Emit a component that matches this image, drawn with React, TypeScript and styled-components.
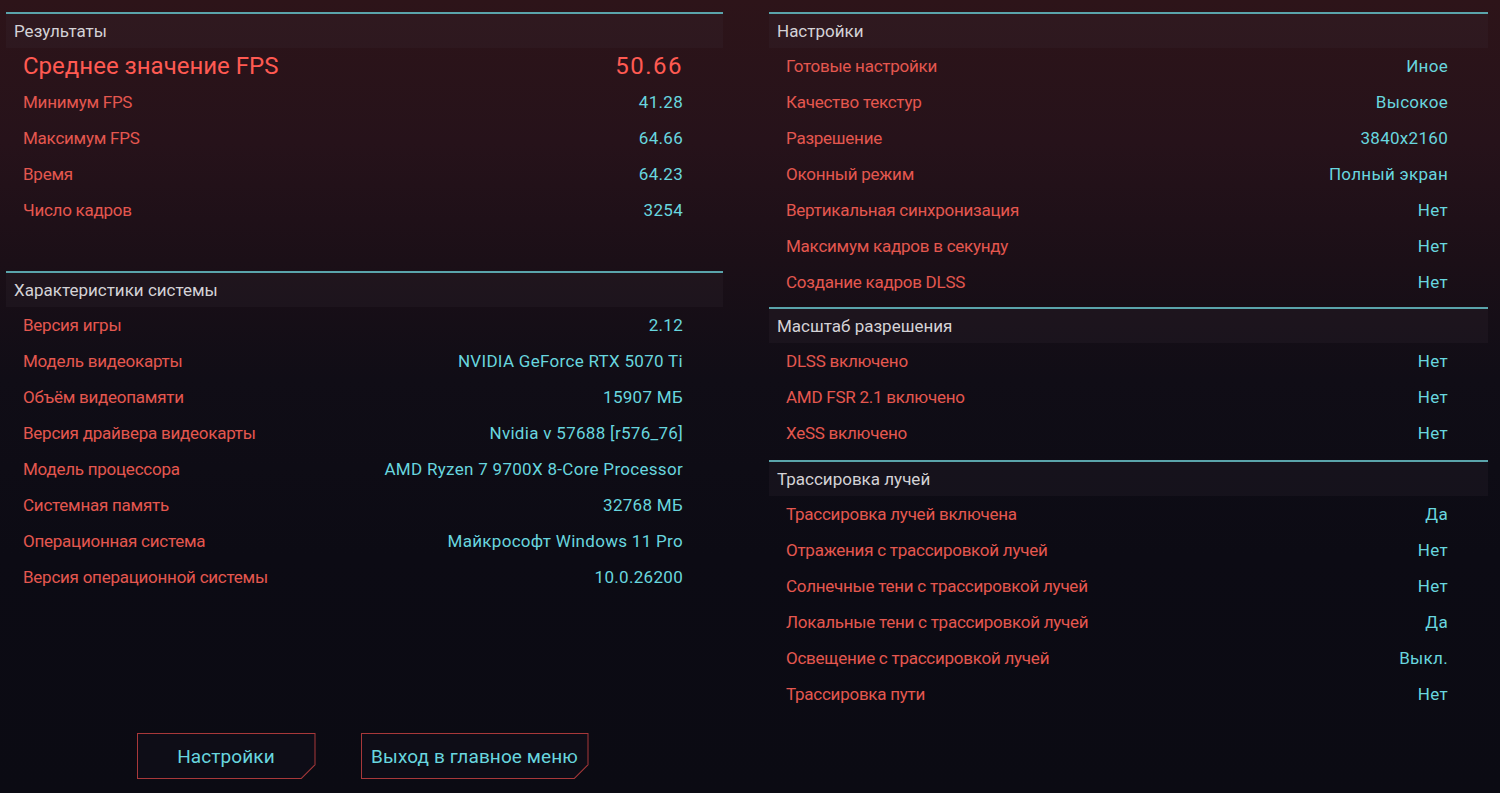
import styled, { createGlobalStyle } from 'styled-components'

const GlobalStyle = createGlobalStyle`
  html, body {
    margin: 0;
    padding: 0;
  }
  body {
    width: 1500px;
    height: 793px;
    overflow: hidden;
    background: linear-gradient(180deg, #2d1419 0%, #26121a 18%, #1b0f17 33%, #100d16 48%, #0c0b14 70%, #0b0b13 100%);
    font-family: Roboto, 'Noto Sans', sans-serif;
  }
`

const Page = styled.main`
  display: grid;
  grid-template-columns: 717px 719px;
  column-gap: 46px;
  padding: 12px 0 0 6px;
  height: 793px;
  box-sizing: border-box;
`

const Column = styled.div`
  display: flex;
  flex-direction: column;
`

const Section = styled.section<{ $after?: number }>`
  display: flex;
  flex-direction: column;
  margin-bottom: ${(p) => p.$after ?? 7}px;
`

const Header = styled.div`
  height: 36px;
  box-sizing: border-box;
  border-top: 2px solid #5aa4ab;
  background: rgba(60, 50, 62, 0.18);
  display: flex;
  align-items: center;
  padding: 0 0 1px 8px;
  color: #d4d2d6;
  font-size: 17px;
`

const Row = styled.div<{ $big?: boolean }>`
  height: 36px;
  box-sizing: border-box;
  display: flex;
  align-items: center;
  justify-content: space-between;
  padding: 0 40px 1px 17px;
  font-size: ${(p) => (p.$big ? '24px' : '17px')};
`

const Label = styled.span<{ $big?: boolean }>`
  color: ${(p) => (p.$big ? '#ff5a52' : '#e4574f')};
  letter-spacing: ${(p) => (p.$big ? '0' : '-0.25px')};
`

const Value = styled.span<{ $big?: boolean }>`
  color: ${(p) => (p.$big ? '#ff5a52' : '#68d6df')};
  letter-spacing: ${(p) => (p.$big ? '1.5px' : '0.3px')};
`

const Buttons = styled.div`
  margin-top: auto;
  margin-bottom: 14px;
  display: flex;
  justify-content: center;
  gap: 45px;
  padding-right: 4px;
`

const ButtonFrame = styled.button<{ $w: number }>`
  width: ${(p) => p.$w}px;
  height: 46px;
  padding: 1px;
  border: none;
  background: #a8383a;
  clip-path: polygon(0 0, 100% 0, 100% calc(100% - 14px), calc(100% - 14px) 100%, 0 100%);
  cursor: pointer;
`

const ButtonInner = styled.span`
  display: flex;
  align-items: center;
  justify-content: center;
  width: 100%;
  height: 100%;
  background: #0e0d17;
  clip-path: polygon(0 0, 100% 0, 100% calc(100% - 13.5px), calc(100% - 13.5px) 100%, 0 100%);
  color: #68d6df;
  font-family: Roboto, 'Noto Sans', sans-serif;
  font-size: 19px;
  letter-spacing: 0.1px;
`

type Item = [string, string]

const results: Item[] = [
  ['Минимум FPS', '41.28'],
  ['Максимум FPS', '64.66'],
  ['Время', '64.23'],
  ['Число кадров', '3254'],
]

const system: Item[] = [
  ['Версия игры', '2.12'],
  ['Модель видеокарты', 'NVIDIA GeForce RTX 5070 Ti'],
  ['Объём видеопамяти', '15907 МБ'],
  ['Версия драйвера видеокарты', 'Nvidia v 57688 [r576_76]'],
  ['Модель процессора', 'AMD Ryzen 7 9700X 8-Core Processor'],
  ['Системная память', '32768 МБ'],
  ['Операционная система', 'Майкрософт Windows 11 Pro'],
  ['Версия операционной системы', '10.0.26200'],
]

const settings: Item[] = [
  ['Готовые настройки', 'Иное'],
  ['Качество текстур', 'Высокое'],
  ['Разрешение', '3840x2160'],
  ['Оконный режим', 'Полный экран'],
  ['Вертикальная синхронизация', 'Нет'],
  ['Максимум кадров в секунду', 'Нет'],
  ['Создание кадров DLSS', 'Нет'],
]

const scaling: Item[] = [
  ['DLSS включено', 'Нет'],
  ['AMD FSR 2.1 включено', 'Нет'],
  ['XeSS включено', 'Нет'],
]

const rayTracing: Item[] = [
  ['Трассировка лучей включена', 'Да'],
  ['Отражения с трассировкой лучей', 'Нет'],
  ['Солнечные тени с трассировкой лучей', 'Нет'],
  ['Локальные тени с трассировкой лучей', 'Да'],
  ['Освещение с трассировкой лучей', 'Выкл.'],
  ['Трассировка пути', 'Нет'],
]

const Rows = ({ items }: { items: Item[] }) => (
  <>
    {items.map(([label, value]) => (
      <Row key={label}>
        <Label>{label}</Label>
        <Value>{value}</Value>
      </Row>
    ))}
  </>
)

export default function App() {
  return (
    <>
      <GlobalStyle />
      <Page>
        <Column>
          <Section $after={43}>
            <Header>Результаты</Header>
            <Row $big>
              <Label $big>Среднее значение FPS</Label>
              <Value $big>50.66</Value>
            </Row>
            <Rows items={results} />
          </Section>
          <Section>
            <Header>Характеристики системы</Header>
            <Rows items={system} />
          </Section>
          <Buttons>
            <ButtonFrame $w={179}>
              <ButtonInner>Настройки</ButtonInner>
            </ButtonFrame>
            <ButtonFrame $w={228}>
              <ButtonInner>Выход в главное меню</ButtonInner>
            </ButtonFrame>
          </Buttons>
        </Column>
        <Column>
          <Section>
            <Header>Настройки</Header>
            <Rows items={settings} />
          </Section>
          <Section $after={9}>
            <Header>Масштаб разрешения</Header>
            <Rows items={scaling} />
          </Section>
          <Section>
            <Header>Трассировка лучей</Header>
            <Rows items={rayTracing} />
          </Section>
        </Column>
      </Page>
    </>
  )
}
